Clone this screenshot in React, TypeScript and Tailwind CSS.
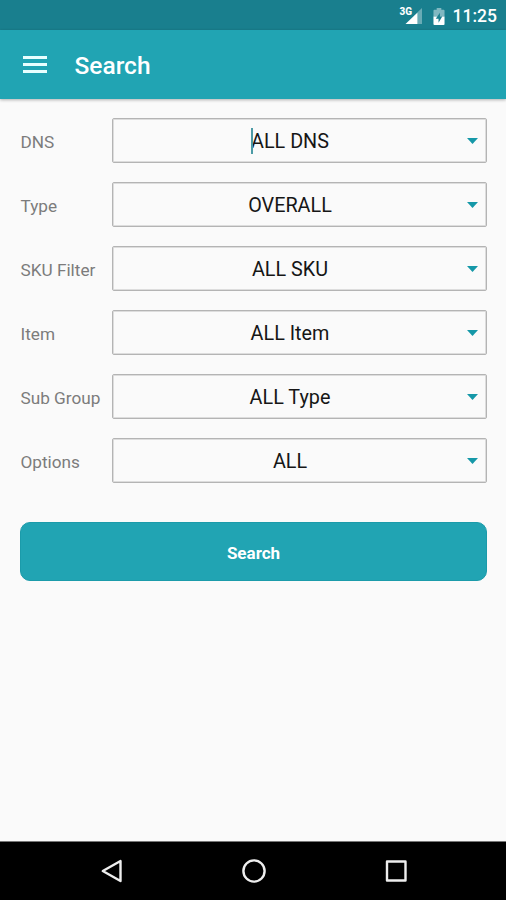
const fields = [
  { label: 'DNS', value: 'ALL DNS', focused: true },
  { label: 'Type', value: 'OVERALL' },
  { label: 'SKU Filter', value: 'ALL SKU' },
  { label: 'Item', value: 'ALL Item' },
  { label: 'Sub Group', value: 'ALL Type' },
  { label: 'Options', value: 'ALL' },
];

function StatusBar() {
  return (
    <div className="flex h-[30px] shrink-0 items-center justify-end bg-[#197f8e] pt-[2px] pr-[9px] text-white">
      <div className="relative mr-[11px] h-[18px] w-[22px]">
        <span className="absolute left-0 top-0 text-[10px] leading-[10px] font-extrabold">3G</span>
        <svg className="absolute left-[5px] top-[1px]" width="17" height="16" viewBox="0 0 17 16">
          <path d="M17 0V16H12.5V4.2Z" fill="#fff" fillOpacity=".35" />
          <path d="M0.5 16 12.5 4.5V16Z" fill="#fff" />
        </svg>
      </div>
      <svg className="mr-[8px]" width="12" height="17" viewBox="0 0 13 18" preserveAspectRatio="none">
        <path d="M1.5 1.8H4V0H9V1.8H11.5Q12.5 1.8 12.5 2.8V9H.5V2.8Q.5 1.8 1.5 1.8Z" fill="#fff" fillOpacity=".45" />
        <path d="M.5 9H12.5V17Q12.5 18 11.5 18H1.5Q.5 18 .5 17Z" fill="#fff" />
        <path d="M7.5 5 3 11.3H6V15.5L10 9H7.5Z" fill="#197f8e" />
      </svg>
      <span className="pt-px text-[17.5px] leading-none font-medium">11:25</span>
    </div>
  );
}

function Header() {
  return (
    <header className="z-10 flex h-[69px] shrink-0 items-center bg-[#21a4b3] pl-[23px] text-white shadow-[0_1px_3px_rgba(0,0,0,0.3)]">
      <div className="mb-px flex w-[24px] flex-col gap-[4px]">
        <div className="h-[3px] bg-[#e8ffff]" />
        <div className="h-[3px] bg-[#e8ffff]" />
        <div className="h-[3px] bg-[#e8ffff]" />
      </div>
      <h1 className="ml-[27.5px] pt-[2px] text-[24.5px] leading-7 font-medium">Search</h1>
    </header>
  );
}

export default function App() {
  return (
    <div className="flex h-[900px] w-[506px] flex-col overflow-hidden bg-[#fafafa] font-['Roboto',sans-serif]">
      <StatusBar />
      <Header />
      <main className="flex flex-1 flex-col px-[20px] pt-[19px] pr-[19px]">
        <div className="flex flex-col gap-[19px]">
          {fields.map((f) => (
            <div key={f.label} className="flex h-[45px] items-center">
              <label className="w-[92px] shrink-0 pt-[2px] pl-[0.5px] text-[17.2px] leading-5 whitespace-nowrap text-[#7c7c7c]">{f.label}</label>
              <div className="flex h-full flex-1 items-center rounded-[2px] border border-[#b4b4b4] pr-[8.5px] shadow-[inset_0_0_0_1px_#dddddd]">
                <div className="flex-1 pt-[3px] pl-[0.5px] text-center text-[19.8px] leading-6 text-[#161616]">
                  <span className="relative">
                    {f.focused && <span className="absolute -top-[2px] left-0 h-[26px] w-[2px] bg-[#4c9ba6]" />}
                    {f.value}
                  </span>
                </div>
                <svg className="mt-px" width="11" height="6" viewBox="0 0 11 6">
                  <path d="M0 0H11L5.5 6Z" fill="#1598a8" />
                </svg>
              </div>
            </div>
          ))}
        </div>
        <button className="mt-[39px] h-[59px] rounded-[10px] border border-[#1b9baa] bg-[#21a4b3] pt-[2px] text-[17px] leading-5 font-bold text-white">
          Search
        </button>
      </main>
      <nav className="h-[59px] shrink-0 border-t border-[#777] bg-black">
        <svg width="506" height="58" viewBox="0 0 506 58" fill="none" stroke="#eee" strokeWidth="2.4">
          <path d="M102.8 29 120.5 19V39Z" strokeLinejoin="round" />
          <circle cx="254" cy="29" r="10.6" />
          <path d="M387 19.5H405.5V38.5H387Z" strokeLinejoin="round" />
        </svg>
      </nav>
    </div>
  );
}
